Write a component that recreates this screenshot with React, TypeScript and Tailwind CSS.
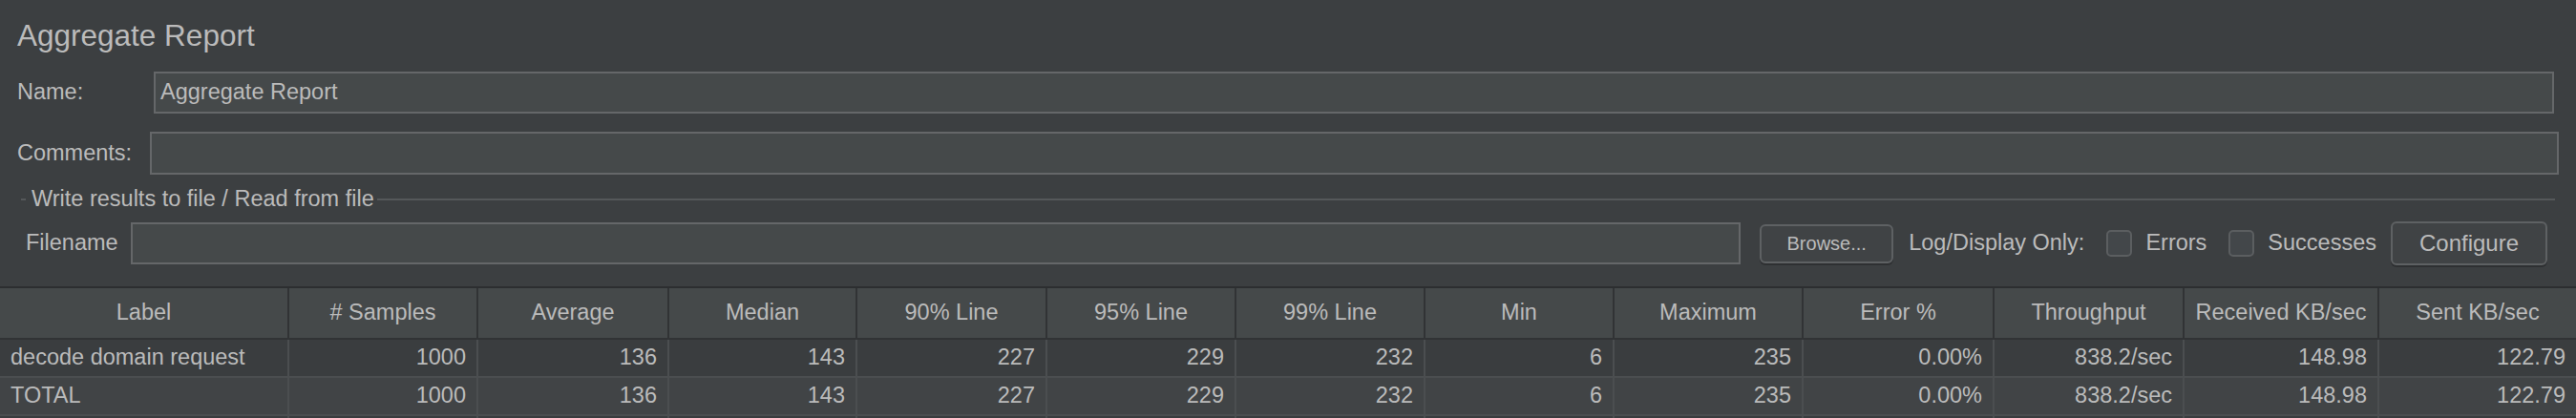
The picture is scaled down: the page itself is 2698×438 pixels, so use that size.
import React from 'react';

const columns = [
  'Label',
  '# Samples',
  'Average',
  'Median',
  '90% Line',
  '95% Line',
  '99% Line',
  'Min',
  'Maximum',
  'Error %',
  'Throughput',
  'Received KB/sec',
  'Sent KB/sec',
];

const rows = [
  ['decode domain request', '1000', '136', '143', '227', '229', '232', '6', '235', '0.00%', '838.2/sec', '148.98', '122.79'],
  ['TOTAL', '1000', '136', '143', '227', '229', '232', '6', '235', '0.00%', '838.2/sec', '148.98', '122.79'],
];

const gridCols =
  'grid grid-cols-[303px_198px_200px_197px_199px_198px_198px_198px_198px_200px_199px_204px_206px]';

const Checkbox: React.FC<{ label: string }> = ({ label }) => (
  <div className="flex items-center gap-[14px]">
    <div className="w-[27px] h-[28px] rounded-[5px] border-2 border-[#5b5e60] bg-[#43474a]" />
    <span>{label}</span>
  </div>
);

const Button: React.FC<{ label: string; className: string }> = ({ label, className }) => (
  <button
    className={`shrink-0 flex items-center justify-center rounded-[6px] border-2 border-[#5e6163] bg-[#404345] shadow-[0_2px_0_#2e3032] text-[#bbbbbb] ${className}`}
  >
    {label}
  </button>
);

export default function App() {
  return (
    <div className="w-[2698px] h-[438px] overflow-hidden bg-[#3c3f41] text-[#bbbbbb] font-['Liberation_Sans',Arial,sans-serif] flex flex-col">
      {/* Title */}
      <div className="shrink-0 h-[75px] pt-[22px] pl-[18px]">
        <h1 className="text-[31.5px] leading-none">Aggregate Report</h1>
      </div>

      {/* Name */}
      <div className="shrink-0 h-[44px] flex items-center pl-[18px] pr-[23px] text-[23.5px]">
        <span className="w-[143px] shrink-0">Name:</span>
        <div className="flex-1 h-full flex items-center border-2 border-[#656769] bg-[#45494a] pl-[5px]">
          Aggregate Report
        </div>
      </div>

      {/* Comments */}
      <div className="shrink-0 mt-[19px] h-[45px] flex items-center pl-[18px] pr-[18px] text-[23.5px]">
        <span className="w-[139px] shrink-0">Comments:</span>
        <div className="flex-1 h-full border-2 border-[#656769] bg-[#45494a]" />
      </div>

      {/* Write results to file */}
      <div className="shrink-0 mt-[12px] h-[28px] flex items-center pl-[22px] pr-[22px] text-[23.5px]">
        <div className="w-[5px] h-[2px] bg-[#55585a]" />
        <span className="ml-[6px] mr-[3px]">Write results to file / Read from file</span>
        <div className="flex-1 h-[2px] bg-[#55585a]" />
      </div>

      {/* Filename row */}
      <div className="shrink-0 mt-[10px] h-[44px] flex items-center pl-[27px] pr-[30px] text-[23.5px]">
        <span className="w-[110px] shrink-0">Filename</span>
        <div className="flex-1 h-full border-2 border-[#656769] bg-[#45494a]" />
        <Button label="Browse..." className="ml-[20px] w-[140px] h-[41px] text-[20px]" />
        <span className="ml-[16px]">Log/Display Only:</span>
        <div className="ml-[23px]">
          <Checkbox label="Errors" />
        </div>
        <div className="ml-[23px]">
          <Checkbox label="Successes" />
        </div>
        <Button label="Configure" className="ml-[15px] w-[164px] h-[46px] text-[24px]" />
      </div>

      {/* Table */}
      <div className="shrink-0 mt-[23px] border-t-2 border-[#2c2e30] text-[23.5px]">
        <div className={`${gridCols} h-[54px] bg-[#45494a] border-b-2 border-[#313335]`}>
          {columns.map((c) => (
            <div key={c} className="flex items-center justify-center border-r-2 border-[#313335] last:border-r-0 whitespace-nowrap">
              {c}
            </div>
          ))}
        </div>
        {rows.map((r, i) => (
          <div
            key={i}
            className={`${gridCols} h-[40px] border-b-2 border-[#4b4e50] ${i % 2 === 0 ? 'bg-[#3a3d3f]' : 'bg-[#414446]'}`}
          >
            {r.map((v, j) => (
              <div
                key={j}
                className={`flex items-center border-r-2 border-[#4b4e50] last:border-r-0 whitespace-nowrap ${
                  j === 0 ? 'pl-[11px]' : 'justify-end pr-[11px]'
                }`}
              >
                {v}
              </div>
            ))}
          </div>
        ))}
        <div className={`${gridCols} h-[20px] bg-[#3a3d3f]`}>
          {columns.map((c) => (
            <div key={c} className="border-r-2 border-[#4b4e50] last:border-r-0" />
          ))}
        </div>
      </div>
    </div>
  );
}
